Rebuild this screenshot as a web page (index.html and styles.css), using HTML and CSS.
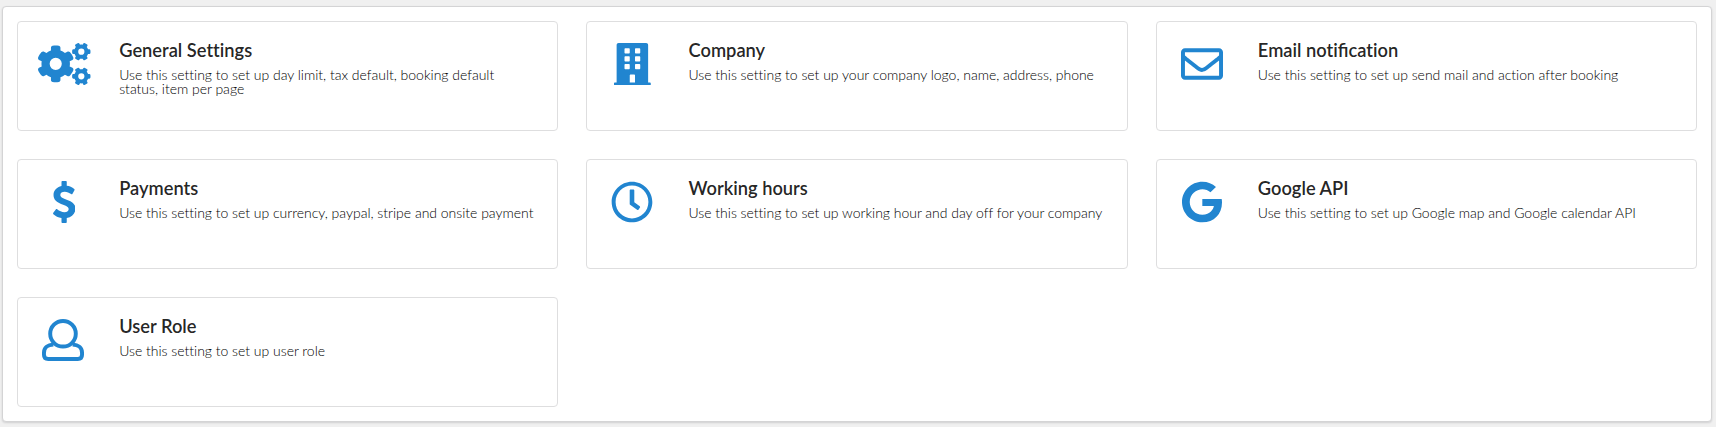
FILE: index.html
```html
<!DOCTYPE html>
<html lang="en">
<head>
<meta charset="utf-8">
<title>Settings</title>
<link rel="stylesheet" href="styles.css">
</head>
<body>
<main class="panel">
  <section class="card">
    <div class="icon icon-wide"><svg viewBox="0 0 640 512" width="52.5" height="42">
      <defs><path id="gear" fill-rule="evenodd" d="M512.1 191l-8.2 14.3c-3 5.3-9.4 7.5-15.1 5.4-11.8-4.4-22.6-10.7-32.1-18.6-4.6-3.8-5.8-10.5-2.8-15.7l8.2-14.3c-6.9-8-12.3-17.3-15.9-27.4h-16.5c-6 0-11.2-4.3-12.2-10.3-2-12-2.1-24.6 0-37.1 1-6 6.2-10.4 12.2-10.4h16.5c3.6-10.1 9-19.4 15.9-27.4l-8.2-14.3c-3-5.2-1.9-11.9 2.8-15.7 9.5-7.9 20.4-14.2 32.1-18.6 5.7-2.1 12.1.1 15.1 5.4l8.2 14.3c10.5-1.9 21.2-1.9 31.7 0L552 6.3c3-5.3 9.4-7.5 15.1-5.4 11.8 4.4 22.6 10.7 32.1 18.6 4.6 3.8 5.8 10.5 2.8 15.7l-8.2 14.3c6.9 8 12.3 17.3 15.9 27.4h16.5c6 0 11.2 4.3 12.2 10.3 2 12 2.1 24.6 0 37.1-1 6-6.2 10.4-12.2 10.4h-16.5c-3.6 10.1-9 19.4-15.9 27.4l8.2 14.3c3 5.2 1.9 11.9-2.8 15.7-9.5 7.9-20.4 14.2-32.1 18.6-5.7 2.1-12.1-.1-15.1-5.4l-8.2-14.3c-10.4 1.9-21.2 1.9-31.7 0zM490 105.800a38 38 0 1 0 76 0a38 38 0 1 0 -76 0z"/></defs>
      <use href="#gear"/><use href="#gear" y="300.500"/>
      <path fill-rule="evenodd" d="M386.3 286.1l33.7 16.8c10.1 5.8 14.5 18.1 10.5 29.1-8.9 24.2-26.4 46.4-42.6 65.8-7.4 8.9-20.2 11.1-30.3 5.3l-29.1-16.8c-16 13.7-34.6 24.6-54.9 31.7v33.6c0 11.6-8.3 21.6-19.7 23.6-24.6 4.2-50.4 4.4-75.9 0-11.5-2-20-11.9-20-23.6V418c-20.3-7.2-38.9-18-54.9-31.7L74 403c-10 5.8-22.9 3.6-30.3-5.3-16.2-19.4-33.3-41.6-42.2-65.7-4-10.9.4-23.2 10.5-29.1l33.3-16.8c-3.9-20.9-3.9-42.400 0-63.400L12 205.800c-10.100-5.800-14.600-18.100-10.500-29 8.900-24.200 26-46.400 42.200-65.800 7.400-8.900 20.200-11.100 30.300-5.300l29.100 16.800c16-13.700 34.600-24.600 54.900-31.700V57.100c0-11.500 8.200-21.500 19.600-23.500 24.600-4.200 50.500-4.400 76-.1 11.500 2 20 11.900 20 23.600v33.600c20.300 7.200 38.900 18 54.900 31.700l29.100-16.800c10-5.800 22.900-3.600 30.300 5.300 16.200 19.400 33.200 41.600 42.100 65.800 4 10.900.1 23.200-10 29.100l-33.700 16.800c3.900 21 3.900 42.500 0 63.500zM142 254.400a74 74 0 1 0 148 0a74 74 0 1 0 -148 0z"/>
    </svg></div>
    <div class="content"><h2 class="title">General Settings</h2><p class="text">Use this setting to set up day limit, tax default, booking default status, item per page</p></div>
  </section>
  <section class="card">
    <div class="icon"><svg viewBox="0 0 448 512" width="36.75" height="42"><path d="M436 480h-20V24c0-13.255-10.745-24-24-24H56C42.745 0 32 10.745 32 24v456H12c-6.627 0-12 5.373-12 12v20h448v-20c0-6.627-5.373-12-12-12zM128 76c0-6.627 5.373-12 12-12h40c6.627 0 12 5.373 12 12v40c0 6.627-5.373 12-12 12h-40c-6.627 0-12-5.373-12-12V76zm0 96c0-6.627 5.373-12 12-12h40c6.627 0 12 5.373 12 12v40c0 6.627-5.373 12-12 12h-40c-6.627 0-12-5.373-12-12v-40zm52 148h-40c-6.627 0-12-5.373-12-12v-40c0-6.627 5.373-12 12-12h40c6.627 0 12 5.373 12 12v40c0 6.627-5.373 12-12 12zm76 160h-64v-84c0-6.627 5.373-12 12-12h40c6.627 0 12 5.373 12 12v84zm64-172c0 6.627-5.373 12-12 12h-40c-6.627 0-12-5.373-12-12v-40c0-6.627 5.373-12 12-12h40c6.627 0 12 5.373 12 12v40zm0-96c0 6.627-5.373 12-12 12h-40c-6.627 0-12-5.373-12-12v-40c0-6.627 5.373-12 12-12h40c6.627 0 12 5.373 12 12v40zm0-96c0 6.627-5.373 12-12 12h-40c-6.627 0-12-5.373-12-12V76c0-6.627 5.373-12 12-12h40c6.627 0 12 5.373 12 12v40z"/></svg></div>
    <div class="content"><h2 class="title">Company</h2><p class="text">Use this setting to set up your company logo, name, address, phone</p></div>
  </section>
  <section class="card">
    <div class="icon"><svg viewBox="0 0 512 512" width="42" height="42"><path d="M464 64H48C21.490 64 0 85.490 0 112v288c0 26.510 21.490 48 48 48h416c26.510 0 48-21.490 48-48V112c0-26.510-21.490-48-48-48zm0 48v40.805c-22.422 18.259-58.168 46.651-134.587 106.490-16.841 13.247-50.201 45.072-73.413 44.701-23.208.375-56.579-31.459-73.413-44.701C106.180 199.465 70.425 171.067 48 152.805V112h416zM48 400V214.398c22.914 18.251 55.409 43.862 104.938 82.646 21.857 17.205 60.134 55.186 103.062 54.955 42.717.231 80.509-37.199 103.053-54.947 49.528-38.783 82.032-64.401 104.947-82.653V400H48z"/></svg></div>
    <div class="content"><h2 class="title">Email noti<span class="lig">fi</span>cation</h2><p class="text">Use this setting to set up send mail and action after booking</p></div>
  </section>
  <section class="card">
    <div class="icon"><svg viewBox="0 0 288 512" width="23.625" height="42"><path d="M113.411 169.375c0-23.337 21.536-38.417 54.865-38.417 26.726 0 54.116 12.263 76.461 28.333 5.880 4.229 14.130 2.354 17.575-4.017l23.552-43.549c2.649-4.898 1.596-10.991-2.575-14.680-24.281-21.477-59.135-34.090-91.289-37.806V12c0-6.627-5.373-12-12-12h-40c-6.627 0-12 5.373-12 12v49.832c-58.627 13.290-97.299 55.917-97.299 108.639 0 123.533 184.765 110.810 184.765 169.414 0 19.823-16.311 41.158-52.124 41.158-30.751 0-62.932-15.880-87.848-35.887-5.310-4.264-13.082-3.315-17.159 2.140l-30.389 40.667c-3.627 4.854-3.075 11.657 1.302 15.847 24.049 23.020 59.249 41.255 98.751 47.973V500c0 6.627 5.373 12 12 12h40c6.627 0 12-5.373 12-12v-47.438c65.720-10.215 106.176-59.186 106.176-116.516.001-119.688-184.764-103.707-184.764-166.671z"/></svg></div>
    <div class="content"><h2 class="title">Payments</h2><p class="text">Use this setting to set up currency, paypal, stripe and onsite payment</p></div>
  </section>
  <section class="card">
    <div class="icon"><svg viewBox="0 0 512 512" width="42" height="42"><path d="M256 8C119 8 8 119 8 256s111 248 248 248 248-111 248-248S393 8 256 8zm0 448c-110.500 0-200-89.500-200-200S145.500 56 256 56s200 89.500 200 200-89.500 200-200 200zm61.800-104.400l-84.900-61.700c-3.100-2.300-4.900-5.900-4.900-9.700V116c0-6.600 5.400-12 12-12h32c6.600 0 12 5.400 12 12v141.700l66.800 48.600c5.400 3.900 6.500 11.400 2.600 16.800L334.600 349c-3.900 5.300-11.400 6.500-16.800 2.600z"/></svg></div>
    <div class="content"><h2 class="title">Working hours</h2><p class="text">Use this setting to set up working hour and day off for your company</p></div>
  </section>
  <section class="card">
    <div class="icon"><svg viewBox="0 0 488 512" width="40" height="42"><path d="M488 261.800C488 403.300 391.100 504 248 504 110.800 504 0 393.200 0 256S110.800 8 248 8c66.800 0 123 24.500 166.300 64.900l-67.500 64.900C258.500 52.600 94.300 116.600 94.300 256c0 86.500 69.100 156.600 153.700 156.600 98.200 0 135-70.400 140.800-106.900H248v-85.300h236.100c2.300 12.700 3.900 24.900 3.900 41.400z"/></svg></div>
    <div class="content"><h2 class="title">Google API</h2><p class="text">Use this setting to set up Google map and Google calendar API</p></div>
  </section>
  <section class="card">
    <div class="icon"><svg class="outline" viewBox="0 0 512 512" width="42" height="42"><circle cx="256" cy="180" r="156"/><path d="M140 312C64 312 24 358 24 412V436Q24 488 76 488H436Q488 488 488 436V412C488 358 448 312 372 312"/></svg></div>
    <div class="content"><h2 class="title">User Role</h2><p class="text">Use this setting to set up user role</p></div>
  </section>
</main>
</body>
</html>
```
FILE: styles.css
```css
* { box-sizing: border-box; }
body {
  margin: 0;
  padding: 6px 4px 5px 2px;
  background: #f0f0f0;
  font-family: Lato, "Open Sans", sans-serif;
  font-size: 14px;
  font-variant-ligatures: none;
}
.lig { font-variant-ligatures: normal; }
.panel {
  display: grid;
  grid-template-columns: repeat(3, 1fr);
  grid-auto-rows: 110px;
  gap: 28px;
  padding: 14px;
  background: #fff;
  border: 1px solid #d4d4d5;
  border-radius: 4px;
  box-shadow: 0 1px 2px 0 rgba(34, 36, 38, .15);
}
.card {
  display: flex;
  gap: 31.2px;
  padding: 21px 22px 21px 20px;
  border: 1px solid #dededf;
  border-radius: 4px;
}
.icon {
  flex: none;
  display: flex;
  justify-content: center;
  width: 50px;
  height: 42px;
}
.icon-wide { justify-content: flex-start; }
.icon svg {
  display: block;
  flex: none;
  fill: #2185d0;
}
.icon .outline {
  fill: none;
  stroke: #2185d0;
  stroke-width: 48;
}
.content {
  flex: 1;
  min-width: 0;
}
.title {
  margin: -4px 0 0;
  font-size: 18.3px;
  font-weight: 600;
  line-height: 22px;
  color: rgba(0, 0, 0, .87);
}
.text {
  margin: 7px 0 0;
  font-weight: 300;
  line-height: 14px;
  letter-spacing: -.015px;
  color: #000;
}
```
